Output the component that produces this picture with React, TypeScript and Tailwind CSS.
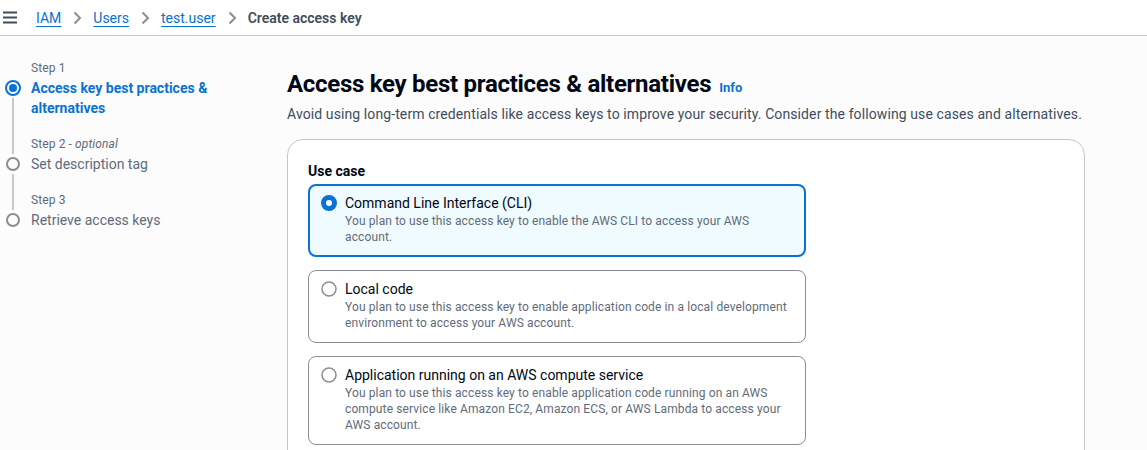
import { ReactNode } from "react";

const font = { fontFamily: 'Roboto, "Open Sans", "Helvetica Neue", Arial, sans-serif' };

function Chevron() {
    return (
        <svg width="16" height="16" viewBox="0 0 16 16" className="mx-2 shrink-0">
            <path d="M5.5 2.5l5.5 5.5-5.5 5.5" fill="none" stroke="#8c8c94" strokeWidth="2" />
        </svg>
    );
}

function Breadcrumbs() {
    const links = ["IAM", "Users", "test.user"];
    return (
        <header className="h-9 bg-white border-b border-[#c6c6cd] flex items-center">
            <svg width="16" height="16" viewBox="0 0 16 16" className="ml-[2px] mr-[18px]">
                <path d="M1 2.5h14M1 7.5h14M1 12.5h14" stroke="#414d5c" strokeWidth="2" />
            </svg>
            {links.map((l) => (
                <div key={l} className="flex items-center">
                    <a className="text-[14px] leading-5 text-[#0972d3] underline underline-offset-[3px] decoration-1">{l}</a>
                    <Chevron />
                </div>
            ))}
            <span className="text-[14px] leading-5 font-semibold text-[#414d5c]">Create access key</span>
        </header>
    );
}

interface Step {
    label: ReactNode;
    title: string;
    active?: boolean;
}

const steps: Step[] = [
    { label: "Step 1", title: "Access key best practices & alternatives", active: true },
    { label: <>Step 2 - <i>optional</i></>, title: "Set description tag" },
    { label: "Step 3", title: "Retrieve access keys" },
];

function StepNav() {
    return (
        <nav className="w-[287px] shrink-0 pt-6 pl-[5px]">
            {steps.map((s, i) => {
                const last = i === steps.length - 1;
                return (
                    <div key={i} className="flex flex-col">
                        <div className="flex">
                            <div className="w-[16px] flex justify-center mr-[10px]">
                                {i > 0 && <div className="w-[2px] bg-[#c6c6cd]" />}
                            </div>
                            <div className="text-[12px] leading-4 pb-[2px] text-[#5f6b7a] tracking-[0.1px]">{s.label}</div>
                        </div>
                        <div className="flex">
                            <div className="w-[16px] flex flex-col items-center mr-[10px]">
                                <div className="h-5 flex items-center">
                                    {s.active ? (
                                        <svg width="16" height="16" viewBox="0 0 16 16">
                                            <circle cx="8" cy="8" r="7" fill="none" stroke="#0972d3" strokeWidth="2" />
                                            <circle cx="8" cy="8" r="4" fill="#0972d3" />
                                        </svg>
                                    ) : (
                                        <svg width="16" height="16" viewBox="0 0 16 16">
                                            <circle cx="8" cy="8" r="6" fill="none" stroke="#8c8c94" strokeWidth="2" />
                                        </svg>
                                    )}
                                </div>
                                {!last && <div className="w-[2px] flex-1 bg-[#c6c6cd]" />}
                            </div>
                            <div
                                className={`text-[14px] leading-5 w-[200px] ${last ? "" : "pb-[18px]"} ${
                                    s.active ? "font-bold text-[#0972d3]" : "text-[#5f6b7a]"
                                }`}
                            >
                                {s.title}
                            </div>
                        </div>
                    </div>
                );
            })}
        </nav>
    );
}

interface Tile {
    title: string;
    desc: string;
    selected?: boolean;
}

const tiles: Tile[] = [
    {
        title: "Command Line Interface (CLI)",
        desc: "You plan to use this access key to enable the AWS CLI to access your AWS account.",
        selected: true,
    },
    {
        title: "Local code",
        desc: "You plan to use this access key to enable application code in a local development environment to access your AWS account.",
    },
    {
        title: "Application running on an AWS compute service",
        desc: "You plan to use this access key to enable application code running on an AWS compute service like Amazon EC2, Amazon ECS, or AWS Lambda to access your AWS account.",
    },
];

function RadioTile({ tile }: { tile: Tile }) {
    return (
        <div
            className={
                tile.selected
                    ? "rounded-lg border-2 border-[#0972d3] bg-[#f0fbff] pl-[11px] pr-[15px] pt-[7px] pb-[10px] flex"
                    : "rounded-lg border border-[#8c8c94] bg-white pl-[12px] pr-[16px] pt-[8px] pb-[11px] flex"
            }
        >
            <div className="h-5 flex items-center mr-2 shrink-0">
                {tile.selected ? (
                    <svg width="16" height="16" viewBox="0 0 16 16">
                        <circle cx="8" cy="8" r="5.5" fill="#fff" stroke="#0972d3" strokeWidth="5" />
                    </svg>
                ) : (
                    <svg width="16" height="16" viewBox="0 0 16 16">
                        <circle cx="8" cy="8" r="7" fill="#fff" stroke="#8c8c94" strokeWidth="1.5" />
                    </svg>
                )}
            </div>
            <div>
                <div className="text-[14px] leading-5 text-[#000716]">{tile.title}</div>
                <div className="text-[12px] leading-4 text-[#5f6b7a] tracking-[0.12px]">{tile.desc}</div>
            </div>
        </div>
    );
}

export default function App() {
    return (
        <div style={font} className="min-h-[450px] bg-[#fcfcfc] text-[#000716]">
            <Breadcrumbs />
            <div className="flex">
                <StepNav />
                <main className="pt-[33px]">
                    <div className="flex items-baseline">
                        <h1 className="text-[24px] leading-[30px] font-bold text-[#000716] tracking-[-0.28px]">
                            Access key best practices &amp; alternatives
                        </h1>
                        <a className="ml-2 text-[13px] font-bold text-[#0972d3]">Info</a>
                    </div>
                    <p className="mt-[5px] text-[14px] leading-5 text-[#414d5c] tracking-[0.1px]">
                        Avoid using long-term credentials like access keys to improve your security. Consider the following use cases and alternatives.
                    </p>
                    <section className="mt-[15px] w-[798px] bg-white border border-[#c6c6cd] rounded-2xl px-5 pt-[21px] pb-5">
                        <div className="text-[14px] leading-5 font-bold text-[#000716] mb-[3px]">Use case</div>
                        <div className="w-[498px] flex flex-col gap-[13px]">
                            {tiles.map((t) => (
                                <RadioTile key={t.title} tile={t} />
                            ))}
                        </div>
                    </section>
                </main>
            </div>
        </div>
    );
}
